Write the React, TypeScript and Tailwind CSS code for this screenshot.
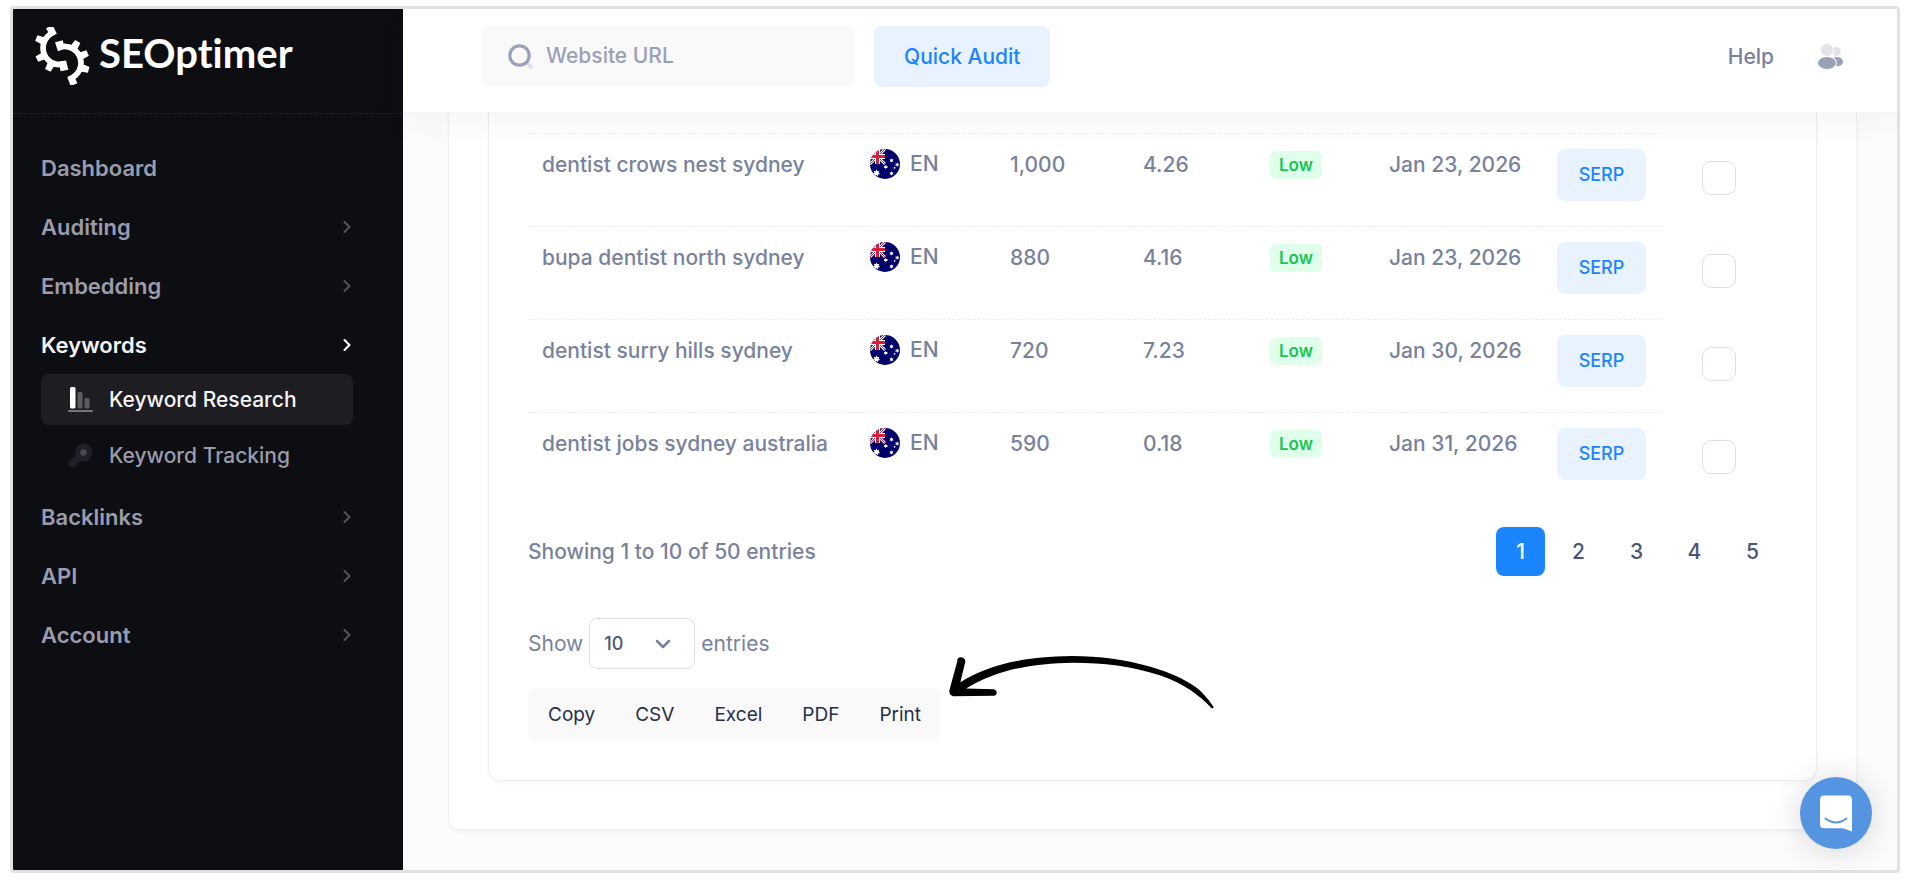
import React from "react";
import { ChevronDown, ChevronRight } from "lucide-react";

type Keyword = { term: string; volume: string; cpc: string; updated: string };

const keywords: Keyword[] = [
  { term: "dentist crows nest sydney", volume: "1,000", cpc: "4.26", updated: "Jan 23, 2026" },
  { term: "bupa dentist north sydney", volume: "880", cpc: "4.16", updated: "Jan 23, 2026" },
  { term: "dentist surry hills sydney", volume: "720", cpc: "7.23", updated: "Jan 30, 2026" },
  { term: "dentist jobs sydney australia", volume: "590", cpc: "0.18", updated: "Jan 31, 2026" },
];

function GearMark() {
  const left = [203, 154, 118];
  const right = [-58, -23, 16];
  return (
    <svg viewBox="22 22 166 174" className="h-[58px] w-[56px] shrink-0" fill="#fff" aria-hidden="true">
      <path d="M76.1 40.1A50 50 0 0 0 108.4 133.9" fill="none" stroke="#fff" strokeWidth="17" />
      <g transform="translate(98 85)">
        {left.map((a) => (
          <path key={a} d="M48 -12L76 -9V9L48 12Z" transform={`rotate(${a})`} />
        ))}
        <path d="M42 -9L71 -11V11L42 11Z" transform="rotate(244)" />
        <path d="M41 -11L69 -12V12L39 10Z" transform="rotate(78)" />
      </g>
      <path d="M103.3 80.8A50 50 0 0 1 132.3 175.7" fill="none" stroke="#fff" strokeWidth="17" />
      <g transform="translate(112 130)">
        {right.map((a) => (
          <path key={a} d="M48 -12L76 -9V9L48 12Z" transform={`rotate(${a})`} />
        ))}
        <path d="M39 -10L67 -12V12L41 11Z" transform="rotate(-104)" />
        <path d="M42 -11L71 -11V11L42 9Z" transform="rotate(66)" />
      </g>
    </svg>
  );
}

function Flag() {
  return (
    <svg viewBox="0 0 30 30" className="size-[30px] shrink-0 rounded-full" role="img" aria-label="Australia">
      <rect width="30" height="30" fill="#00006b" />
      <path d="M0 0L15 15M15 0L0 15" stroke="#fff" strokeWidth="2.6" />
      <path d="M0 0L15 15M15 0L0 15" stroke="#d4213d" strokeWidth="1" />
      <path d="M7.5 0V15M0 7.5H15" stroke="#fff" strokeWidth="5" />
      <path d="M7.5 0V15M0 7.5H15" stroke="#d4213d" strokeWidth="3" />
      <g fill="#fff">
        <path d="M6.5 20.2l.9 2 2.1-.5-1 1.9 1.7 1.4-2.2.4.1 2.2-1.6-1.5-1.6 1.5.1-2.2-2.2-.4 1.7-1.4-1-1.9 2.1.5z" />
        <path d="M21.5 9.2l.6 1.3 1.5-.2-.9 1.1.9 1.1-1.5-.1-.6 1.3-.6-1.3-1.5.1.9-1.1-.9-1.1 1.5.2z" />
        <path d="M15.8 15.8l.6 1.3 1.5-.2-.9 1.1.9 1.1-1.5-.1-.6 1.3-.6-1.3-1.5.1.9-1.1-.9-1.1 1.5.2z" />
        <path d="M27.2 13.4l.6 1.3 1.5-.2-.9 1.1.9 1.1-1.5-.1-.6 1.3-.6-1.3-1.5.1.9-1.1-.9-1.1 1.5.2z" />
        <path d="M21.5 22.2l.6 1.3 1.5-.2-.9 1.1.9 1.1-1.5-.1-.6 1.3-.6-1.3-1.5.1.9-1.1-.9-1.1 1.5.2z" />
        <circle cx="24.6" cy="18.8" r=".9" />
      </g>
    </svg>
  );
}

function NavItem({ label, active, leaf }: { label: string; active?: boolean; leaf?: boolean }) {
  return (
    <a
      href="#"
      className={
        "flex h-[59px] items-center justify-between text-[22px] leading-7 font-semibold " +
        (active ? "text-[#f4f4f5]" : "text-[#9a9cae]")
      }
    >
      {label}
      {!leaf && (
        <ChevronRight className={"-mr-1 size-5 " + (active ? "text-white" : "text-[#50525f]")} strokeWidth={2.5} />
      )}
    </a>
  );
}

function Sidebar() {
  return (
    <aside className="w-[390px] shrink-0 bg-[#0d0e12]">
      <a href="#" className="flex h-[105px] items-start gap-[9px] border-b border-dashed border-[#23242c] pt-[18px] pl-[21px]">
        <GearMark />
        <span className="font-['Lato',sans-serif] text-[40px] leading-[52px] font-bold text-white [font-variant-ligatures:none]">
          SEOptimer
        </span>
      </a>
      <nav className="flex flex-col pt-6 pr-[50px] pl-7">
        <NavItem label="Dashboard" leaf />
        <NavItem label="Auditing" />
        <NavItem label="Embedding" />
        <NavItem label="Keywords" active />
        <div className="mb-[5px] flex flex-col gap-1 text-[21px] leading-7 font-medium">
          <a href="#" className="flex h-[51px] items-center gap-4 rounded-lg bg-[#1e1d22] pl-[27px] text-[#f4f4f5]">
            <svg viewBox="0 0 25 27" className="h-[27px] w-[25px]" aria-hidden="true">
              <rect x="2" y="1" width="5.5" height="21.5" rx="1.5" fill="#fff" />
              <rect x="9.5" y="6" width="5" height="16.5" rx="1.5" fill="#5d5c61" />
              <rect x="16.5" y="12" width="5" height="10.5" rx="1.5" fill="#5d5c61" />
              <rect x="0" y="24" width="25" height="2" rx="1" fill="#77767a" />
            </svg>
            Keyword Research
          </a>
          <a href="#" className="flex h-[53px] items-center gap-4 pl-[27px] text-[#9a9cae]">
            <svg viewBox="0 0 25 25" className="size-[25px]" aria-hidden="true">
              <path
                d="M15.5.5a9 9 0 1 1-2.7 17.6l-1 1.1-.9-.1-1 1.2-1.5-1.4-.6.7 1.4 1.4-1.9 2.4c-.8 1-1.9 1.300-3.300 1.100l-2.300-.6c-.9-.5-1.400-1.500-1.300-2.600l.1-2.500L7.300 12A9 9 0 0 1 15.500.5z"
                fill="#1f2027"
              />
              <circle cx="15.5" cy="9.5" r="3.2" fill="#464852" />
            </svg>
            Keyword Tracking
          </a>
        </div>
        <NavItem label="Backlinks" />
        <NavItem label="API" />
        <NavItem label="Account" />
      </nav>
    </aside>
  );
}

function Header() {
  return (
    <header className="relative z-10 flex h-[103px] shrink-0 items-start bg-white pt-[17px] pr-[54px] pl-[79px] text-[21px] leading-7 font-medium shadow-[0_10px_30px_0_rgba(82,63,105,0.05)]">
      <label className="flex h-[60px] w-[373px] items-center gap-[13px] rounded-lg bg-[#f9f9f9] px-[26px]">
        <svg viewBox="0 0 25 25" className="size-[25px] shrink-0" fill="none" aria-hidden="true">
          <path d="M18.5 18.5L23 23" stroke="#dbdfe9" strokeWidth="3.5" strokeLinecap="round" />
          <circle cx="11.5" cy="11.5" r="9.7" stroke="#99a1b7" strokeWidth="3.2" />
        </svg>
        <input
          type="text"
          aria-label="Website URL"
          placeholder="Website URL"
          className="w-full min-w-0 bg-transparent text-[#99a1b7] outline-none placeholder:text-[#99a1b7]"
        />
      </label>
      <button type="button" className="ml-[19px] h-[61px] rounded-lg bg-[#e9f3ff] px-[30px] text-[#1b84ff]">
        Quick Audit
      </button>
      <div className="ml-auto flex h-[61px] items-center gap-11">
        <a href="#" className="text-[#78829d]">Help</a>
        <button type="button" aria-label="Account">
          <svg viewBox="0 0 25 25" className="size-[25px]" aria-hidden="true">
            <circle cx="18.3" cy="7.5" r="4.5" fill="#e1e3ea" />
            <ellipse cx="19" cy="17.7" rx="6" ry="4.6" fill="#99a1b7" />
            <circle cx="9" cy="6" r="7" fill="#fff" />
            <ellipse cx="9" cy="19" rx="10" ry="6.9" fill="#fff" />
            <circle cx="9" cy="6" r="6" fill="#e1e3ea" />
            <ellipse cx="9" cy="19" rx="9" ry="5.9" fill="#99a1b7" />
          </svg>
        </button>
      </div>
    </header>
  );
}

function KeywordTable() {
  const cell = "border-t border-dashed border-[#ececf1] pl-[14px] align-top";
  const textCell = cell + " pt-4";
  const mediaCell = cell + " pt-[15px]";
  return (
    <table className="w-full table-fixed border-separate border-spacing-0 text-left text-[21px] leading-[30px] font-medium text-[#78829d]">
      <colgroup>
        <col className="w-[328px]" />
        <col className="w-[140px]" />
        <col className="w-[133px]" />
        <col className="w-[127px]" />
        <col className="w-[119px]" />
        <col className="w-[168px]" />
        <col className="w-[119px]" />
        <col className="w-[115px]" />
      </colgroup>
      <tbody>
        {keywords.map((k) => (
          <tr key={k.term} className="h-[93px] whitespace-nowrap">
            <td className={textCell}>{k.term}</td>
            <td className={mediaCell}>
              <div className="flex items-center gap-[10px]">
                <Flag />
                EN
              </div>
            </td>
            <td className={textCell}>{k.volume}</td>
            <td className={textCell}>{k.cpc}</td>
            <td className={textCell}>
              <div className="flex h-[30px] items-center">
                <span className="flex h-7 items-center rounded-md bg-[#dfffea] px-[9px] text-[17px] font-semibold text-[#17c653]">
                  Low
                </span>
              </div>
            </td>
            <td className={textCell}>{k.updated}</td>
            <td className={mediaCell}>
              <button type="button" className="h-[52px] w-[89px] rounded-lg bg-[#e9f3ff] text-lg text-[#1b84ff]">
                SERP
              </button>
            </td>
            <td className="pt-7 pl-10 align-top">
              <input
                type="checkbox"
                aria-label={`Select ${k.term}`}
                className="block size-[34px] appearance-none rounded-[9px] border border-[#dbdfe9] bg-white checked:bg-[#1b84ff]"
              />
            </td>
          </tr>
        ))}
      </tbody>
    </table>
  );
}

function TableFooter() {
  return (
    <div className="text-[#78829d]">
      <div className="mt-[22px] flex items-center justify-between text-[21px] leading-7 font-medium">
        <p>Showing 1 to 10 of 50 entries</p>
        <div className="flex gap-[9px] text-[#4b5675]">
          {["1", "2", "3", "4", "5"].map((n) => (
            <button
              key={n}
              type="button"
              className={"h-[49px] w-[49px] rounded-lg " + (n === "1" ? "bg-[#1b84ff] text-white" : "")}
            >
              {n}
            </button>
          ))}
        </div>
      </div>
      <div className="mt-[42px] flex items-center gap-[6px] text-[21px] leading-7">
        <label htmlFor="page-size">Show</label>
        <div className="grid items-center">
          <select
            id="page-size"
            defaultValue="10"
            className="col-start-1 row-start-1 h-[51px] w-[106px] appearance-none rounded-lg border border-[#dbdfe9] bg-white pl-[14px] text-lg font-medium text-[#4b5675]"
          >
            <option>10</option>
            <option>25</option>
            <option>50</option>
          </select>
          <ChevronDown
            className="pointer-events-none col-start-1 row-start-1 mr-5 size-6 justify-self-end text-[#78829d]"
            strokeWidth={2.5}
          />
        </div>
        <span>entries</span>
      </div>
      <div className="relative mt-[19px] w-fit">
        <div className="flex rounded-lg bg-[#f9f9f9] text-[19px] leading-6 text-[#252f4a]">
          {["Copy", "CSV", "Excel", "PDF", "Print"].map((label) => (
            <button key={label} type="button" className="h-[53px] px-5">
              {label}
            </button>
          ))}
        </div>
        <svg
          viewBox="57 50 793 158"
          className="absolute -top-8 left-full ml-2 h-[53px] w-[265px]"
          aria-hidden="true"
        >
          <path
            d="M82 65C80 49 105 50 106 66L91 128C165 83 260 52 425 50C590 50 750 98 812 157Q835 181 849 202Q848 208 842 205C810 170 760 132 690 108C600 80 520 70 430 70C300 72 200 92 108 147L190 149C203 151 203 168 190 169L70 170Q57 167 58 153Z"
            fill="#000"
          />
        </svg>
      </div>
    </div>
  );
}

export default function App() {
  return (
    <div className="flex h-screen bg-white px-[10px] pt-[6px] pb-[7px] font-['Inter',sans-serif]">
      <div className="relative flex min-w-0 flex-1 overflow-hidden rounded-[4px] border-[3px] border-[#e1e1e1]">
        <Sidebar />
        <div className="flex min-w-0 flex-1 flex-col bg-[#fcfcfc]">
          <Header />
          <main className="pr-10 pl-[45px]">
            <section className="rounded-b-xl border border-t-0 border-[#f1f1f4] bg-white px-[39px] pb-12 shadow-[0_3px_4px_0_rgba(0,0,0,0.03)]">
              <div className="rounded-b-xl border border-t-0 border-[#ededf2] bg-white px-[39px] pt-[21px] pb-[39px] shadow-[0_3px_4px_0_rgba(0,0,0,0.03)]">
                <KeywordTable />
                <TableFooter />
              </div>
            </section>
          </main>
        </div>
        <button
          type="button"
          aria-label="Open chat"
          className="absolute right-[25px] bottom-[21px] z-20 flex size-[72px] items-center justify-center rounded-full bg-[#5594e0] shadow-[0_2px_32px_0_rgba(0,0,0,0.16)]"
        >
          <svg viewBox="0 0 32 37" className="h-[37px] w-8" aria-hidden="true">
            <path d="M4 .5H28a4 4 0 0 1 4 4V36.5L23 33.2H4a4 4 0 0 1-4-4V4.5a4 4 0 0 1 4-4z" fill="#fff" />
            <path d="M5.5 23.5Q16 31.5 26.5 23.5" fill="none" stroke="#5594e0" strokeWidth="2" strokeLinecap="round" />
          </svg>
        </button>
      </div>
    </div>
  );
}
